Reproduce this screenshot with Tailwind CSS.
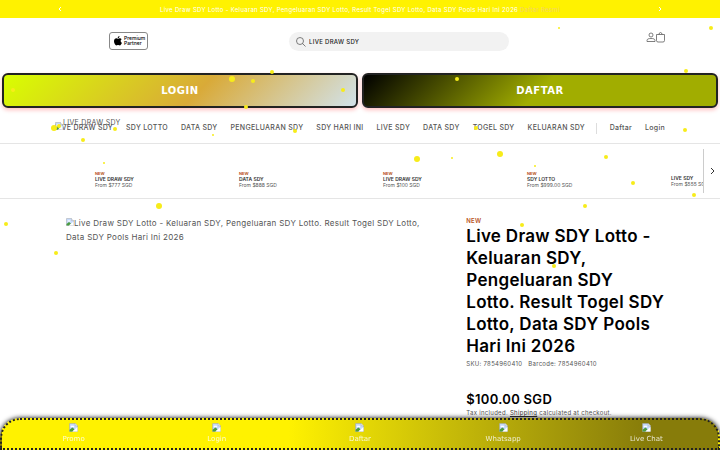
<!DOCTYPE html>
<html lang="id">
<head>
  <meta charset="UTF-8">
  <meta name="viewport" content="width=device-width, initial-scale=1.0">
  <title>LIVE DRAW SDY</title>
  <script src="https://cdn.jsdelivr.net/npm/@tailwindcss/browser@4"></script>
</head>
<body class="bg-white font-['Inter',sans-serif] text-[6px] tracking-wider text-[#555]">
  <!-- Broken image placeholder, shared by the logo, the product photo and the bottom bar -->
  <svg class="hidden">
    <symbol id="broken" viewBox="0 0 16 16">
      <path d="M1 1h10l4 4v10H1z" fill="#c6dafc" stroke="#a0a5aa"/>
      <path d="M11 1v4h4" fill="#fff" stroke="#a0a5aa"/>
      <path d="M3 7a2 2 0 0 1 3-2 2 2 0 0 1 3 2z" fill="#fff"/>
      <path d="M1 15v-3l5-4 4 3-4 4z" fill="#4b9b3f"/>
      <path d="M15 7 6 15h9z" fill="#fff"/>
    </symbol>
  </svg>

  <!-- Announcement bar -->
  <div class="flex h-[18px] items-center justify-between bg-[#fff200] px-[56px] text-white">
    <button aria-label="Previous" class="w-2 text-white"><svg class="size-2" viewBox="0 0 8 8" fill="none" stroke="currentColor"><path d="M5 2 3 4l2 2"/></svg></button>
    <p>Live Draw SDY Lotto - Keluaran SDY, Pengeluaran SDY Lotto, Result Togel SDY Lotto, Data SDY Pools Hari Ini 2026 <a href="#" class="text-[#f3d36b]">Daftar Resmi</a></p>
    <button aria-label="Next" class="w-2 text-white"><svg class="size-2" viewBox="0 0 8 8" fill="none" stroke="currentColor"><path d="m3 2 2 2-2 2"/></svg></button>
  </div>

  <!-- Header -->
  <header class="grid h-[55px] grid-cols-[3fr_220px_2fr] items-start px-[55px] pt-[14px]">
    <a href="#" class="ml-[54px] flex h-[18px] w-[39px] items-center gap-[2px] rounded-[3px] border border-[#888] pl-1 text-[5px] leading-[5px] font-medium tracking-normal text-black">
      <svg class="h-[10px] w-2 shrink-0" viewBox="0 0 16 20"><path d="M11 0c.2 2-1.500 4.300-3.500 4.200C7.300 2.200 9 .3 11 0zM8 5.500c.8 0 2-1 3.800-1 1.400 0 2.700.7 3.500 1.900-3 1.700-2.600 5.900.6 7.200C15 16.200 13.200 19 11.500 19c-1.400 0-1.800-.8-3.400-.8s-2.100.8-3.400.8C2.700 19 0 14.600 0 10.700 0 6.800 2.300 4.600 4.700 4.600c1.400 0 2.500.9 3.300.9z"/></svg>
      <span>Premium<br>Partner</span>
    </a>
    <label class="flex h-[19px] items-center gap-[3px] rounded-full bg-[#f2f2f2] px-[7px]">
      <svg class="size-[10px] shrink-0" viewBox="0 0 20 20" fill="none" stroke="#555" stroke-width="1.500"><circle cx="8" cy="8" r="7"/><path d="m13 13 6 6"/></svg>
      <input type="text" aria-label="Search" value="LIVE DRAW SDY" class="w-full bg-transparent font-medium text-[#222] outline-none">
    </label>
    <div class="flex justify-end">
      <a href="#" aria-label="Account"><svg class="h-[11px] w-[10px]" viewBox="0 0 20 22" fill="none" stroke="#555" stroke-width="1.500"><circle cx="10" cy="6" r="4"/><path d="M2 19v-2c0-3 3-4 8-4s8 1 8 4v2z"/></svg></a>
      <a href="#" aria-label="Cart"><svg class="h-[11px] w-[9px]" viewBox="0 0 18 22" fill="none" stroke="#555" stroke-width="1.500"><path d="M1 5h16v12q0 3-3 3H4q-3 0-3-3z"/><path d="M6 5q0-4 3-4t3 4"/></svg></a>
    </div>
  </header>

  <div class="grid grid-cols-2 gap-[4px] px-[2px] font-['DejaVu_Sans',sans-serif] text-[10px] font-bold text-white">
    <button class="h-[35px] rounded-md border-2 border-[#222] bg-linear-[135deg] from-[#d9ff00] via-[#d9aa38] via-55% to-[#d2e2ea] tracking-wider shadow-[0_2px_4px_#ff000040]">LOGIN</button>
    <button class="h-[35px] rounded-md border-2 border-[#222] bg-linear-[135deg] from-black to-[#a1ad00] to-50% tracking-wider shadow-[0_2px_4px_#ff000040]">DAFTAR</button>
  </div>

  <!-- Main menu, with the logo hanging over its first item -->
  <nav class="relative flex h-[36px] items-center border-b border-[#e5e5e5] px-[55px] pt-[6px] text-[7px] font-medium whitespace-nowrap">
    <a href="#" class="absolute top-[10px] left-[55px] flex leading-[9px] font-normal"><svg class="mt-[4px] size-[8px]"><use href="#broken"/></svg>LIVE DRAW SDY</a>
    <div class="flex gap-[13px]">
      <a href="#">LIVE DRAW SDY</a>
      <a href="#">SDY LOTTO</a>
      <a href="#">DATA SDY</a>
      <a href="#">PENGELUARAN SDY</a>
      <a href="#">SDY HARI INI</a>
      <a href="#">LIVE SDY</a>
      <a href="#">DATA SDY</a>
      <a href="#">TOGEL SDY</a>
      <a href="#">KELUARAN SDY</a>
    </div>
    <div class="ml-auto flex gap-[13px] border-l border-[#ddd] pl-[13px]">
      <a href="#">Daftar</a>
      <a href="#">Login</a>
    </div>
  </nav>

  <!-- Product strip -->
  <section class="flex h-[55px] items-center border-b border-[#e5e5e5] text-[5px] leading-[6px] tracking-normal">
    <ul class="flex h-full min-w-0 flex-1 items-start overflow-hidden pt-[27px] pl-[95px] whitespace-nowrap">
      <li class="w-[144px] shrink-0"><p class="text-[4px] leading-[5px] font-bold text-[#b8521c]">NEW</p><a href="#" class="block font-semibold text-[#333]">LIVE DRAW SDY</a><p class="leading-[7px]">From $777 SGD</p></li>
      <li class="w-[144px] shrink-0"><p class="text-[4px] leading-[5px] font-bold text-[#b8521c]">NEW</p><a href="#" class="block font-semibold text-[#333]">DATA SDY</a><p class="leading-[7px]">From $888 SGD</p></li>
      <li class="w-[144px] shrink-0"><p class="text-[4px] leading-[5px] font-bold text-[#b8521c]">NEW</p><a href="#" class="block font-semibold text-[#333]">LIVE DRAW SDY</a><p class="leading-[7px]">From $100 SGD</p></li>
      <li class="w-[144px] shrink-0"><p class="text-[4px] leading-[5px] font-bold text-[#b8521c]">NEW</p><a href="#" class="block font-semibold text-[#333]">SDY LOTTO</a><p class="leading-[7px]">From $999.00 SGD</p></li>
      <li class="w-[144px] shrink-0 pt-[4px]"><a href="#" class="block font-semibold text-[#333]">LIVE SDY</a><p class="leading-[7px]">From $555 SGD</p></li>
    </ul>
    <button aria-label="Next products" class="flex h-[44px] w-[17px] items-center justify-center border-l border-[#ccc]"><svg class="size-2" viewBox="0 0 8 8" fill="none" stroke="#333"><path d="m3 1 3 3-3 3"/></svg></button>
  </section>

  <!-- Product -->
  <main class="grid grid-cols-[5fr_3fr] px-[55px] pt-[17px] pb-[30px]">
    <div class="pr-[6px] pl-[11px] text-[8px] leading-[14px]">
      <p><svg class="inline size-[8px] align-baseline"><use href="#broken"/></svg>Live Draw SDY Lotto - Keluaran SDY, Pengeluaran SDY Lotto. Result Togel SDY Lotto, Data SDY Pools Hari Ini 2026</p>
    </div>
    <div class="pl-[30px]">
      <p class="leading-[9px] font-semibold text-[#b8521c]">NEW</p>
      <h1 class="text-[17px] leading-[22px] font-semibold text-black">Live Draw SDY Lotto - Keluaran SDY, Pengeluaran SDY Lotto. Result Togel SDY Lotto, Data SDY Pools Hari Ini 2026</h1>
      <p class="mt-[1px] flex gap-[6px] leading-[12px]"><span>SKU: 7854960410</span><span>Barcode: 7854960410</span></p>
      <p class="mt-[20px] text-[13px] leading-[18px] font-semibold text-black">$100.00 SGD</p>
      <p class="leading-[10px]">Tax included. <a href="#" class="text-[#333] underline">Shipping</a> calculated at checkout.</p>
    </div>
  </main>

  <!-- Bottom bar -->
  <nav class="fixed inset-x-0 bottom-0 grid h-[32px] grid-cols-5 rounded-t-[20px] border-2 border-dotted border-[#222] bg-linear-to-r from-[#fff200] from-40% to-[#877c0a] to-90% font-['DejaVu_Sans',sans-serif] text-[7px] leading-[8px] tracking-normal text-white/80 shadow-[0_0_5px_#000]">
    <a href="#" class="flex flex-col items-center gap-[3px] pt-[3px]"><svg class="size-[9px]"><use href="#broken"/></svg>Promo</a>
    <a href="#" class="flex flex-col items-center gap-[3px] pt-[3px]"><svg class="size-[9px]"><use href="#broken"/></svg>Login</a>
    <a href="#" class="flex flex-col items-center gap-[3px] pt-[3px]"><svg class="size-[9px]"><use href="#broken"/></svg>Daftar</a>
    <a href="#" class="flex flex-col items-center gap-[3px] pt-[3px]"><svg class="size-[9px]"><use href="#broken"/></svg>Whatsapp</a>
    <a href="#" class="flex flex-col items-center gap-[3px] pt-[3px]"><svg class="size-[9px]"><use href="#broken"/></svg>Live Chat</a>
  </nav>

  <!-- Falling confetti -->
  <svg class="pointer-events-none fixed inset-0 h-full w-full" viewBox="0 0 720 450" fill="#f7ec1a">
    <circle cx="232" cy="79" r="3"/><circle cx="272" cy="72" r="2"/><circle cx="253" cy="81" r="2"/><circle cx="343" cy="90" r="2"/><circle cx="246" cy="107" r="2"/>
    <circle cx="457" cy="79" r="2"/><circle cx="686" cy="71" r="2"/><circle cx="711" cy="28" r="2"/><circle cx="559" cy="28" r="1"/><circle cx="13" cy="90" r="2"/>
    <circle cx="54" cy="128" r="3"/><circle cx="59" cy="126" r="2"/><circle cx="115" cy="129" r="2"/><circle cx="83" cy="140" r="2"/><circle cx="295" cy="131" r="2"/>
    <circle cx="476" cy="128" r="2"/><circle cx="685" cy="130" r="2"/><circle cx="213" cy="135" r="1"/><circle cx="104" cy="163" r="1"/><circle cx="417" cy="159" r="3"/>
    <circle cx="452" cy="158" r="1"/><circle cx="500" cy="154" r="3"/><circle cx="606" cy="157" r="2"/><circle cx="535" cy="166" r="1"/><circle cx="633" cy="183" r="2"/>
    <circle cx="694" cy="195" r="2"/><circle cx="585" cy="206" r="2"/><circle cx="159" cy="206" r="3"/><circle cx="6" cy="224" r="2"/><circle cx="56" cy="253" r="2"/>
    <circle cx="522" cy="225" r="2"/><circle cx="554" cy="266" r="2"/>
  </svg>
</body>
</html>
